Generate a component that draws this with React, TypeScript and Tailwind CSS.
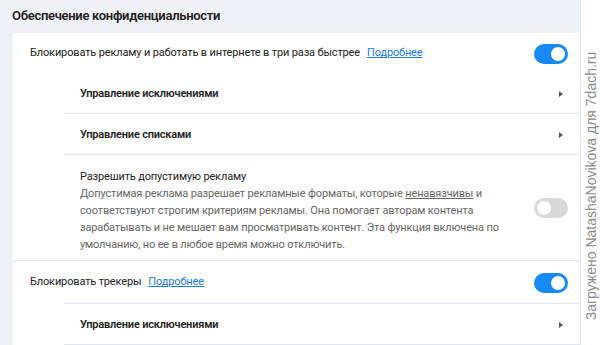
import React from "react";

const font = { fontFamily: 'Roboto, "Noto Sans", sans-serif' };

function Toggle({ on }: { on: boolean }) {
  return (
    <div
      className={`w-[34px] h-[20px] rounded-full flex items-center px-[3px] shrink-0 ${
        on ? "bg-[#1689f5] justify-end" : "bg-[#d9d9d9] justify-start"
      }`}
    >
      <div className="w-[14px] h-[14px] rounded-full bg-white" />
    </div>
  );
}

function Arrow() {
  return (
    <svg width="6" height="8" viewBox="0 0 6 8" className="shrink-0">
      <path d="M1 1 L5 4 L1 7 Z" fill="#555" />
    </svg>
  );
}

function SubRow({ label, last }: { label: string; last?: boolean }) {
  return (
    <div className={`ml-[51px] flex items-center justify-between h-[41px] pl-[16px] pr-[16px] pt-[2px] ${last ? "" : "border-b border-[#dfe5ec]"}`}>
      <span className="text-[11px] font-semibold tracking-[-0.2px] text-[#222]">{label}</span>
      <Arrow />
    </div>
  );
}

export default function App() {
  return (
    <div className="w-[600px] h-[345px] flex overflow-hidden" style={font}>
      <div className="w-[580px] bg-[#eef1f5] flex flex-col">
        <div className="h-[33px] pl-[12px] flex items-center text-[13px] tracking-[-0.3px] font-semibold text-[#222] pb-[2px]">
          Обеспечение конфиденциальности
        </div>
        <div className="ml-[13px] flex-1 bg-white flex flex-col">
          <div className="h-[40px] flex items-center justify-between pl-[17px] pr-[12px] pt-[1px]">
            <div className="text-[11px] tracking-[-0.15px] text-[#222] flex items-center gap-[7px]">
              <span>Блокировать рекламу и работать в интернете в три раза быстрее</span>
              <span className="text-[#1a7ae0] underline">Подробнее</span>
            </div>
            <Toggle on />
          </div>
          <SubRow label="Управление исключениями" />
          <SubRow label="Управление списками" />
          <div className="ml-[51px] h-[105px] flex items-center justify-between pl-[16px] pr-[12px]">
            <div className="text-[11px] tracking-[-0.15px] leading-[17px] whitespace-nowrap pt-[5px]">
              <div className="text-[#222]">Разрешить допустимую рекламу</div>
              <div className="text-[#666]">
                Допустимая реклама разрешает рекламные форматы, которые{" "}
                <span className="underline">ненавязчивы</span> и
                <br />
                соответствуют строгим критериям рекламы. Она помогает авторам контента
                <br />
                зарабатывать и не мешает вам просматривать контент. Эта функция включена по
                <br />
                умолчанию, но ее в любое время можно отключить.
              </div>
            </div>
            <Toggle on={false} />
          </div>
          <div className="border-t border-[#e3e7ec] h-[43px] flex items-center justify-between pl-[17px] pr-[12px] pt-[1px]">
            <div className="text-[11px] tracking-[-0.15px] text-[#222] flex items-center gap-[7px]">
              <span>Блокировать трекеры</span>
              <span className="text-[#1a7ae0] underline">Подробнее</span>
            </div>
            <Toggle on />
          </div>
          <div className="ml-[51px] border-t border-[#dfe5ec]" />
          <SubRow label="Управление исключениями" />
        </div>
      </div>
      <div className="w-[20px] bg-white border-l border-[#e6e8eb] relative">
        <div
          className="absolute whitespace-nowrap text-[14px] text-[#8a8a8a]"
          style={{
            fontFamily: '"Liberation Sans", Arial, sans-serif',
            left: "10px",
            top: "186px",
            transform: "translate(-50%, -50%) rotate(-90deg)",
          }}
        >
          Загружено NatashaNovikova для 7dach.ru
        </div>
      </div>
    </div>
  );
}
